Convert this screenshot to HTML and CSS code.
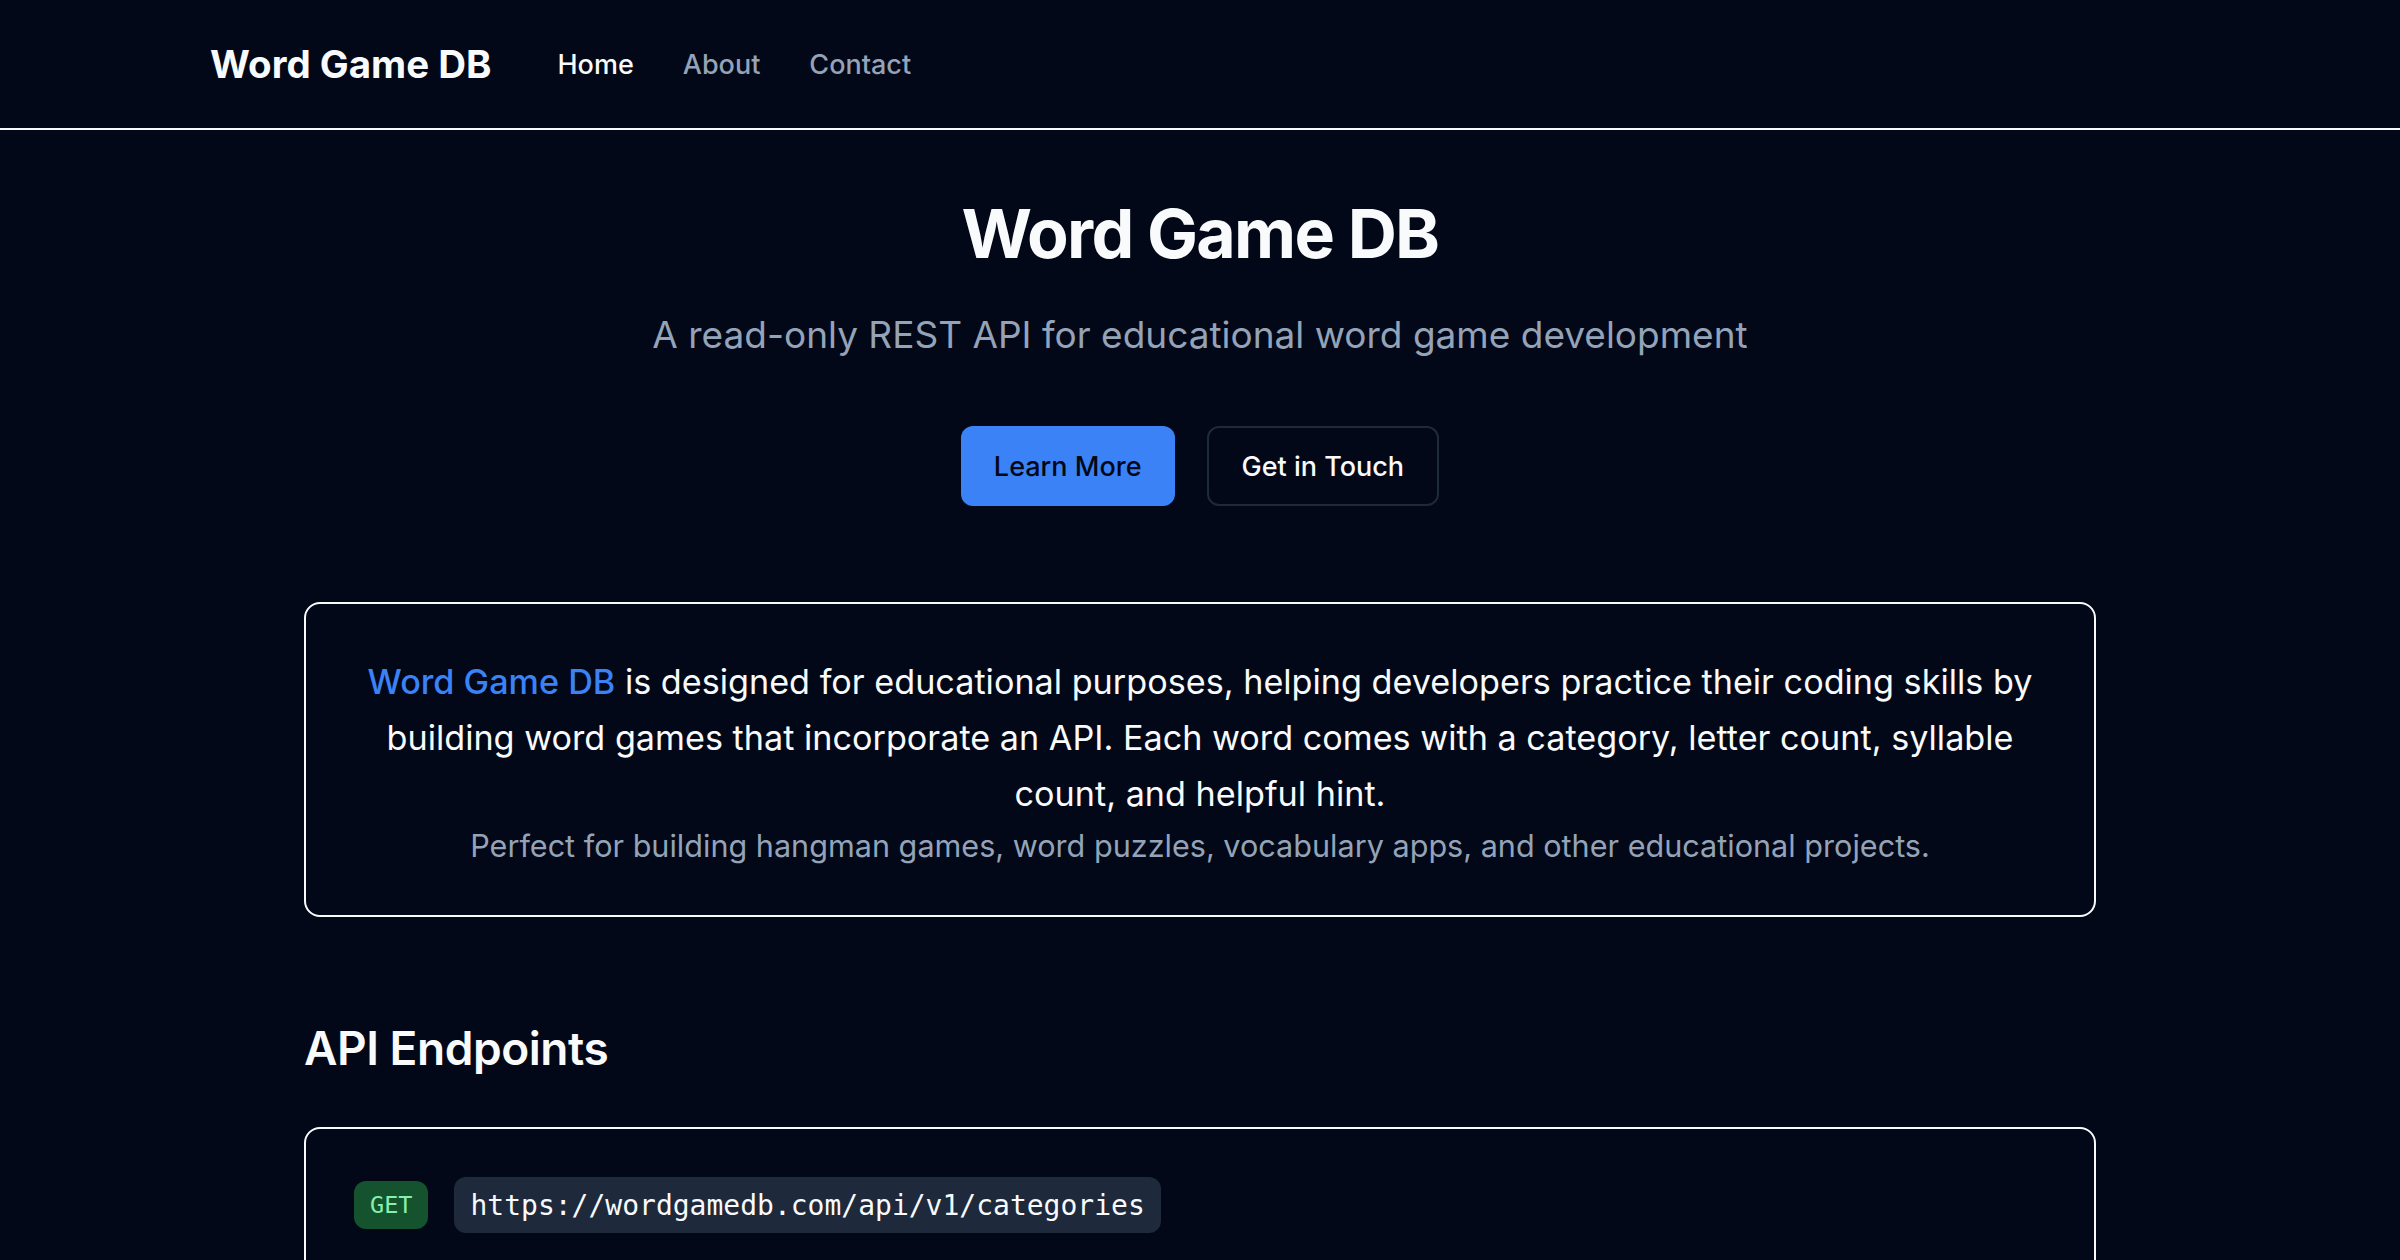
FILE: index.html
```html
<!DOCTYPE html>
<html lang="en">
<head>
<meta charset="utf-8">
<title>Word Game DB</title>
<link rel="stylesheet" href="styles.css">
</head>
<body>
<header class="site-header">
  <div class="header-inner">
    <a class="logo" href="#">Word Game DB</a>
    <nav class="nav">
      <a class="nav-link active" href="#">Home</a>
      <a class="nav-link" href="#">About</a>
      <a class="nav-link" href="#">Contact</a>
    </nav>
  </div>
</header>
<main class="main">
  <section class="hero">
    <h1 class="hero-title">Word Game DB</h1>
    <p class="hero-sub">A read-only REST API for educational word game development</p>
    <div class="hero-actions">
      <a class="btn btn-primary" href="#">Learn More</a>
      <a class="btn btn-outline" href="#">Get in Touch</a>
    </div>
  </section>
  <section class="intro-card">
    <p class="intro-text"><span class="brand">Word Game DB</span> is designed for educational purposes, helping developers practice their coding skills by building word games that incorporate an API. Each word comes with a category, letter count, syllable count, and helpful hint.</p>
    <p class="intro-muted">Perfect for building hangman games, word puzzles, vocabulary apps, and other educational projects.</p>
  </section>
  <section class="endpoints">
    <h2 class="section-title">API Endpoints</h2>
    <div class="endpoint-card">
      <div class="endpoint-row">
        <span class="method">GET</span>
        <code class="url">https://wordgamedb.com/api/v1/categories</code>
      </div>
      <p class="endpoint-desc">Retrieve all available word categories</p>
    </div>
  </section>
</main>
</body>
</html>
```

FILE: styles.css
```css
* { box-sizing: border-box; }
html, body { margin: 0; padding: 0; }
body {
  background: #020817;
  color: #f8fafc;
  font-family: Inter, "Noto Sans", sans-serif;
}
a { text-decoration: none; color: inherit; }

.site-header {
  height: 130px;
  border-bottom: 2px solid #f8fafc;
}
.header-inner {
  height: 128px;
  padding-left: 210px;
  display: flex;
  align-items: center;
}
.logo {
  font-size: 38.5px;
  font-weight: 700;
  color: #f8fafc;
}
.nav {
  display: flex;
  gap: 49px;
  margin-left: 66px;
}
.nav-link {
  font-size: 27px;
  font-weight: 500;
  color: #94a3b8;
}
.nav-link.active { color: #f8fafc; }

.main {
  max-width: 1792px;
  margin: 0 auto;
}
.hero {
  padding-top: 66px;
  text-align: center;
}
.hero-title {
  margin: 0;
  font-size: 68px;
  line-height: 75px;
  font-weight: 700;
  letter-spacing: -0.025em;
}
.hero-sub {
  margin: 40px 0 0;
  font-size: 37px;
  line-height: 48px;
  color: #94a3b8;
}
.hero-actions {
  margin-top: 67px;
  display: flex;
  justify-content: center;
  gap: 32px;
}
.btn {
  height: 80px;
  padding: 0 33px;
  border-radius: 12px;
  font-size: 27px;
  font-weight: 500;
  display: inline-flex;
  align-items: center;
}
.btn-primary {
  background: #3b82f6;
  color: #020817;
}
.btn-outline {
  border: 2px solid #1e293b;
  color: #f8fafc;
}

.intro-card {
  margin-top: 96px;
  border: 2px solid #f8fafc;
  border-radius: 16px;
  padding: 50px 48px 45px;
  text-align: center;
}
.intro-text {
  margin: 0;
  font-size: 34.2px;
  line-height: 56px;
}
.brand {
  color: #3b82f6;
  font-weight: 500;
}
.intro-muted {
  margin: 0;
  font-size: 30.6px;
  line-height: 48px;
  color: #94a3b8;
}

.endpoints { margin-top: 103px; }
.section-title {
  margin: 0;
  font-size: 46px;
  line-height: 56px;
  font-weight: 600;
  letter-spacing: -0.01em;
}
.endpoint-card {
  margin-top: 51px;
  border: 2px solid #f8fafc;
  border-radius: 16px;
  padding: 48px 48px 47px;
}
.endpoint-row {
  display: flex;
  align-items: center;
  gap: 26px;
}
.method {
  height: 48px;
  padding: 0 16px;
  border-radius: 12px;
  background: #14532d;
  color: #86efac;
  font-family: "DejaVu Sans Mono", monospace;
  font-size: 23.5px;
  display: inline-flex;
  align-items: center;
}
.url {
  height: 56px;
  padding: 0 16px;
  border-radius: 12px;
  background: #1e293b;
  color: #f8fafc;
  font-family: "DejaVu Sans Mono", monospace;
  font-size: 28px;
  display: inline-flex;
  align-items: center;
}
.endpoint-desc {
  margin: 22px 0 0;
  padding-left: 86px;
  font-size: 27px;
  line-height: 40px;
  font-weight: 600;
  color: #f8fafc;
}
```
